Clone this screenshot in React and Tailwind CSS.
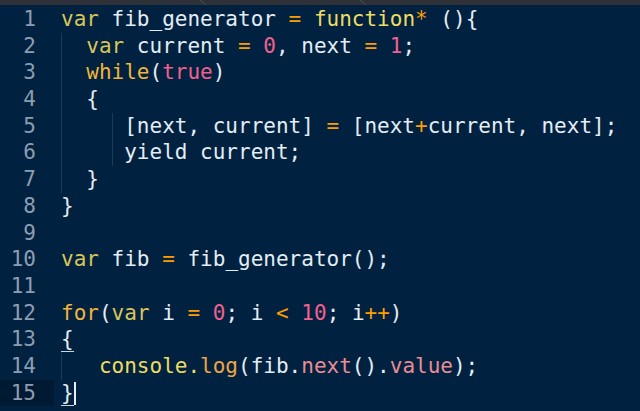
import React from 'react';

/* ─── Token colours (Cobalt-ish) ───────────────────────────── */
const KW = 'text-[#d8c65a]';   // var
const FN = 'text-[#efdc62]';   // function, console
const CT = 'text-[#f2b43c]';   // while / for
const OP = 'text-[#ff9d00]';   // = * + < ++
const NU = 'text-[#f0608c]';   // numbers, true
const ME = 'text-[#e98c95]';   // next, value
const LG = 'text-[#eea547]';   // log
const TX = 'text-[#e4ecf4]';   // plain

// indent: list of units, each [chars, hasGuide]
const LINES = [
  { indent: [], toks: [['var', KW], [' fib_generator ', TX], ['=', OP], [' ', TX], ['function', FN], ['*', OP], [' (){', TX]] },
  { indent: [[2, true]], toks: [['var', KW], [' current ', TX], ['=', OP], [' ', TX], ['0', NU], [', next ', TX], ['=', OP], [' ', TX], ['1', NU], [';', TX]] },
  { indent: [[2, true]], toks: [['while', CT], ['(', TX], ['true', NU], [')', TX]] },
  { indent: [[2, true]], toks: [['{', TX]] },
  { indent: [[2, true], [2, false], [1, true]], toks: [['[next, current] ', TX], ['=', OP], [' [next', TX], ['+', OP], ['current, next];', TX]] },
  { indent: [[2, true], [2, false], [1, true]], toks: [['yield current;', TX]] },
  { indent: [[2, true]], toks: [['}', TX]] },
  { indent: [], toks: [['}', TX]] },
  { indent: [], toks: [] },
  { indent: [], toks: [['var', KW], [' fib ', TX], ['=', OP], [' fib_generator();', TX]] },
  { indent: [], toks: [] },
  { indent: [], toks: [['for', CT], ['(', TX], ['var', KW], [' i ', TX], ['=', OP], [' ', TX], ['0', NU], ['; i ', TX], ['<', OP], [' ', TX], ['10', NU], ['; i', TX], ['++', OP], [')', TX]] },
  { indent: [], toks: [['{', TX, 'match']] },
  { indent: [[3, true]], toks: [['console.', FN], ['log', LG], ['(fib.', TX], ['next', ME], ['().', TX], ['value', ME], [');', TX]] },
  { indent: [], toks: [['}', TX, 'cursor']], active: true },
];

const W = { 1: 'w-[1ch]', 2: 'w-[2ch]', 3: 'w-[3ch]' };

function Token({ text, cls, mark }) {
  if (mark === 'match') {
    return <span className={`${cls} border-b border-[#c8d4e0]`}>{text}</span>;
  }
  if (mark === 'cursor') {
    return (
      <>
        <span className={`${cls} border-b border-[#c8d4e0]`}>{text}</span>
        <span className="inline-block w-[2px] h-[23px] bg-[#e8eef6] align-middle -mr-[2px]" />
      </>
    );
  }
  return <span className={cls}>{text}</span>;
}

function CodeLine({ n, line }) {
  return (
    <div className="flex items-stretch leading-[26.7px] h-[26.7px]">
      <div className={`w-[54px] shrink-0 pr-[18px] text-right text-[#8d9db1] ${line.active ? 'bg-[#001a33]' : ''}`}>
        {n}
      </div>
      <div className="flex items-stretch pl-[7px] whitespace-pre">
        {line.indent.map(([c, g], i) => (
          <div key={i} className={`${W[c]} shrink-0 ${g ? 'shadow-[inset_1px_0_0_#1c3b5c]' : ''}`} />
        ))}
        <div>
          {line.toks.map(([t, c, m], i) => <Token key={i} text={t} cls={c} mark={m} />)}
        </div>
      </div>
    </div>
  );
}

export default function App() {
  return (
    <div className="w-[640px] h-[411px] overflow-hidden bg-[#002240] flex flex-col">
      {/* tab strip remnant */}
      <div className="h-[5px] shrink-0 bg-[#2e3238]">
        <svg width="640" height="5" viewBox="0 0 640 5" className="block">
          <path d="M200 0 L206 5" stroke="#4a4f57" strokeWidth="1" />
          <path d="M360 0 L366 5" stroke="#4a4f57" strokeWidth="1" />
        </svg>
      </div>
      <div
        className="pt-px text-[21px]"
        style={{ fontFamily: '"DejaVu Sans Mono", "Liberation Mono", monospace' }}
      >
        {LINES.map((line, i) => <CodeLine key={i} n={i + 1} line={line} />)}
      </div>
    </div>
  );
}
